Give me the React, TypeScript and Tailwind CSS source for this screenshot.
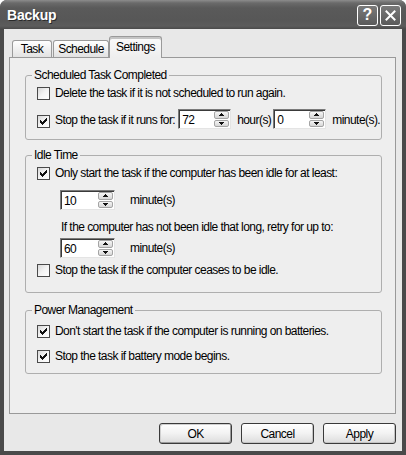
import React from "react";

const CHECK = [
  "......X",
  ".....XX",
  "X...XXX",
  "XX.XXX.",
  "XXXXX..",
  ".XXX...",
  "..X....",
];

function Check({ checked, className = "" }: { checked: boolean; className?: string }) {
  return (
    <div
      className={`w-[13px] h-[13px] shrink-0 border border-[#4a4a4a] bg-gradient-to-br from-[#d8d8d8] via-[#f4f4f4] to-white ${className}`}
    >
      {checked && (
        <svg width="11" height="11" viewBox="0 0 11 11" shapeRendering="crispEdges">
          {CHECK.flatMap((row, y) =>
            row.split("").map((c, x) =>
              c === "X" ? <rect key={`${x}-${y}`} x={x + 2} y={y + 2} width="1" height="1" fill="#111" /> : null
            )
          )}
        </svg>
      )}
    </div>
  );
}

function Arrow({ up }: { up: boolean }) {
  return (
    <svg width="5" height="3" viewBox="0 0 5 3" shapeRendering="crispEdges">
      {up ? (
        <>
          <rect x="2" y="0" width="1" height="1" fill="#111" />
          <rect x="1" y="1" width="3" height="1" fill="#111" />
          <rect x="0" y="2" width="5" height="1" fill="#111" />
        </>
      ) : (
        <>
          <rect x="0" y="0" width="5" height="1" fill="#111" />
          <rect x="1" y="1" width="3" height="1" fill="#111" />
          <rect x="2" y="2" width="1" height="1" fill="#111" />
        </>
      )}
    </svg>
  );
}

function Spin({ value, wide }: { value: string; wide?: boolean }) {
  return (
    <div
      className={`${wide ? "w-[55px]" : "w-[53px]"} h-[20px] shrink-0 flex bg-white border border-t-[#7a7a7a] border-l-[#7a7a7a] border-r-[#e4e4e4] border-b-[#e4e4e4] shadow-[inset_1px_1px_0_#3a3a3a]`}
    >
      <div className="flex-1 flex items-center pl-[3px] pt-[1px] leading-[14px] text-[12px]">{value}</div>
      <div className="w-[16px] flex flex-col gap-[1px] py-[1px] pr-[1px]">
        <div className="flex-1 flex items-center justify-center border border-[#a4a4a4] rounded-[2px] bg-gradient-to-b from-[#f6f6f6] to-[#d6d6d6]">
          <Arrow up />
        </div>
        <div className="flex-1 flex items-center justify-center border border-[#a4a4a4] rounded-[2px] bg-gradient-to-b from-[#f6f6f6] to-[#d6d6d6]">
          <Arrow up={false} />
        </div>
      </div>
    </div>
  );
}

function Group({
  label,
  className,
  children,
}: {
  label: string;
  className: string;
  children: React.ReactNode;
}) {
  return (
    <div className={`relative border border-[#aeaeae] rounded-[3px] pl-[11px] ${className}`}>
      <span className="absolute left-[6px] top-[-8px] px-[2px] bg-[#eeeeee] leading-[14px] whitespace-nowrap">
        {label}
      </span>
      {children}
    </div>
  );
}

function Row({ checked, text, className = "" }: { checked: boolean; text: string; className?: string }) {
  return (
    <div className={`flex items-center gap-[5px] h-[13px] leading-[13px] whitespace-nowrap ${className}`}>
      <Check checked={checked} />
      <span>{text}</span>
    </div>
  );
}

function Btn({ label, def }: { label: string; def?: boolean }) {
  return (
    <div
      className={`w-[73px] h-[21px] flex items-center justify-center rounded-[3px] border border-[#3a3a3a] bg-gradient-to-b from-white via-[#f2f2f2] to-[#dcdcdc] ${
        def ? "shadow-[inset_1px_1px_0_#d0d0d0,inset_-1px_-1px_0_#9a9a9a]" : "shadow-[inset_-1px_-1px_0_#c4c4c4]"
      }`}
    >
      {label}
    </div>
  );
}

export default function App() {
  return (
    <div className="w-[406px] h-[455px] bg-white font-['Liberation_Sans',Arial,sans-serif] text-[12px] tracking-[-0.55px] text-black">
      <div className="w-full h-full flex flex-col rounded-t-[7px] overflow-hidden bg-[#4a4a4a]">
        {/* Title bar */}
        <div className="h-[29px] shrink-0 flex items-center pl-[7px] pr-[5px] pt-[1px] bg-[linear-gradient(to_bottom,#8c8c8c_0px,#6a6a6a_3px,#5a5a5a_8px,#575757_20px,#5c5c5c_26px,#4a4a4a_29px)]">
          <div className="flex-1 text-white font-bold text-[14px] tracking-[-0.2px] [text-shadow:1px_1px_0_#2a2a2a]">
            Backup
          </div>
          <div className="flex gap-[2px]">
            <div className="w-[21px] h-[21px] rounded-[3px] border border-white bg-gradient-to-b from-[#7a7a7a] to-[#5a5a5a] flex items-center justify-center text-white font-bold text-[16px] tracking-normal leading-none">
              ?
            </div>
            <div className="w-[21px] h-[21px] rounded-[3px] border border-white bg-gradient-to-b from-[#7a7a7a] to-[#5a5a5a] flex items-center justify-center">
              <svg width="11" height="11" viewBox="0 0 11 11">
                <path d="M1.5 1.5 L9.5 9.5 M9.5 1.5 L1.5 9.5" stroke="white" strokeWidth="2" strokeLinecap="square" />
              </svg>
            </div>
          </div>
        </div>

        {/* Body */}
        <div className="flex-1 mx-[4px] mb-[4px] bg-[#e8e8e8] flex flex-col">
          {/* Tabs */}
          <div className="h-[28px] shrink-0 flex items-end pl-[8px]">
            <div className="w-[40px] h-[17px] flex items-center justify-center border border-b-0 border-[#9a9a9a] rounded-t-[3px] bg-gradient-to-b from-white to-[#e2e2e2]">
              Task
            </div>
            <div className="ml-[1px] w-[56px] h-[17px] flex items-center justify-center border border-b-0 border-[#9a9a9a] rounded-t-[3px] bg-gradient-to-b from-white to-[#e2e2e2]">
              Schedule
            </div>
            <div className="relative z-10 -mb-[1px] w-[53px] h-[22px] flex items-center justify-center pb-[2px] border border-b-0 border-[#9a9a9a] rounded-t-[3px] bg-gradient-to-b from-[#fafafa] to-[#eeeeee] shadow-[inset_0_2px_0_#c4c4c4]">
              Settings
            </div>
          </div>

          {/* Panel */}
          <div className="ml-[5px] mr-[6px] h-[357px] shrink-0 border border-[#999999] bg-[#eeeeee] pt-[17px] pl-[15px] pr-[13px]">
            <Group label="Scheduled Task Completed" className="pt-[11px] pb-[10px]">
              <Row checked={false} text="Delete the task if it is not scheduled to run again." />
              <div className="mt-[9px] h-[20px] flex items-center whitespace-nowrap">
                <Check checked className="mt-[4px]" />
                <span className="ml-[5px] mt-[2px]">Stop the task if it runs for:</span>
                <div className="ml-[3px]">
                  <Spin value="72" />
                </div>
                <span className="ml-[6px] mt-[2px]">hour(s)</span>
                <div className="ml-[2px]">
                  <Spin value="0" />
                </div>
                <span className="ml-[6px] mt-[2px]">minute(s).</span>
              </div>
            </Group>

            <Group label="Idle Time" className="mt-[15px] pt-[11px] pb-[15px]">
              <Row checked text="Only start the task if the computer has been idle for at least:" />
              <div className="mt-[10px] ml-[23px] h-[20px] flex items-center">
                <Spin value="10" wide />
                <span className="ml-[15px]">minute(s)</span>
              </div>
              <div className="mt-[10px] ml-[24px] h-[14px] leading-[14px] whitespace-nowrap">
                If the computer has not been idle that long, retry for up to:
              </div>
              <div className="mt-[4px] ml-[23px] h-[20px] flex items-center">
                <Spin value="60" wide />
                <span className="ml-[15px]">minute(s)</span>
              </div>
              <Row checked={false} text="Stop the task if the computer ceases to be idle." className="mt-[6px]" />
            </Group>

            <Group label="Power Management" className="mt-[17px] pt-[14px] pb-[10px]">
              <Row checked text="Don't start the task if the computer is running on batteries." />
              <Row checked text="Stop the task if battery mode begins." className="mt-[12px]" />
            </Group>
          </div>

          {/* Buttons */}
          <div className="mt-[9px] mr-[6px] flex justify-end gap-[9px]">
            <Btn label="OK" def />
            <Btn label="Cancel" />
            <Btn label="Apply" />
          </div>
        </div>
      </div>
    </div>
  );
}
